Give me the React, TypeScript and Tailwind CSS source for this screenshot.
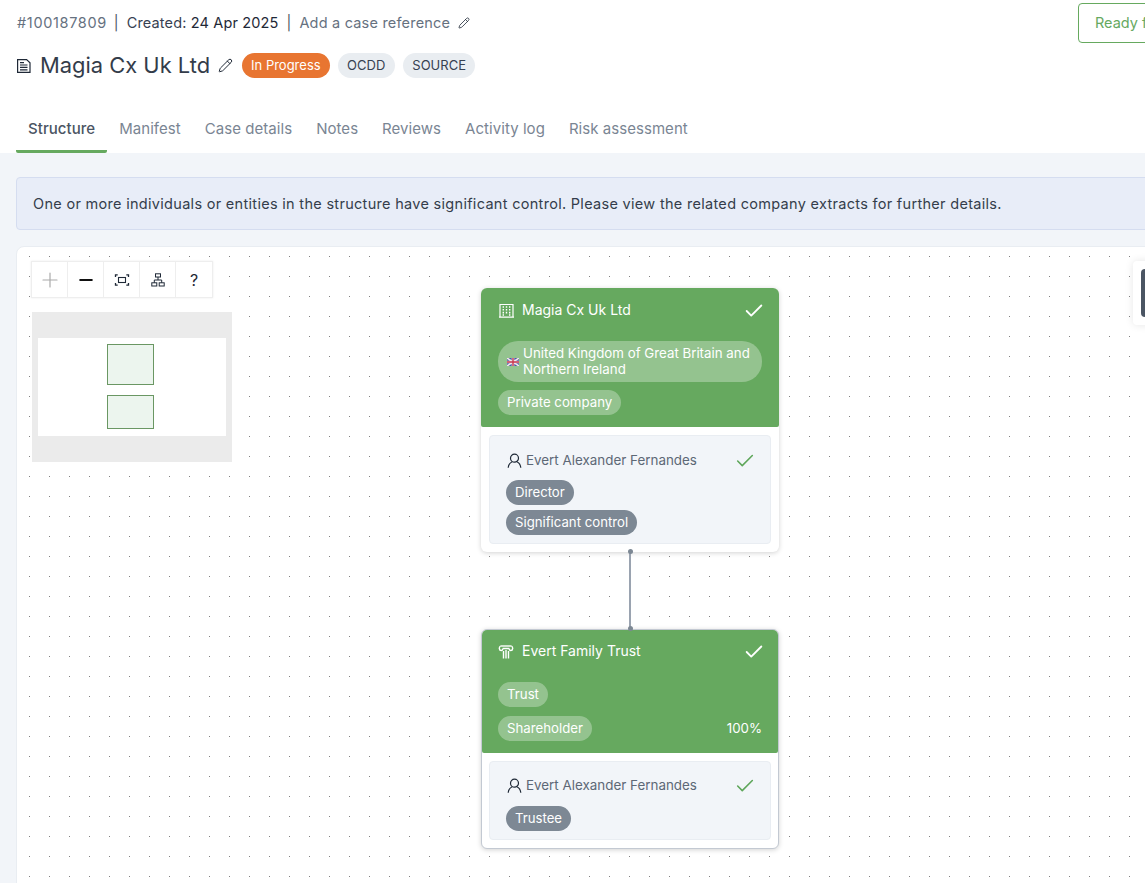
import type { ReactNode } from 'react';
import { Check, Minus, Pencil, Plus } from 'lucide-react';

const tabs = ['Structure', 'Manifest', 'Case details', 'Notes', 'Reviews', 'Activity log', 'Risk assessment'];

const DocIcon = () => (
    <svg width="16" height="16" viewBox="0 0 16 16" fill="none" stroke="#1f2937" strokeWidth="1.2" className="shrink-0">
        <path d="M1.6 1.6h9l3.4 3.2v9.6H1.6z" />
        <path d="M4 4.6h4M4 7h7.5M4 9.4h7.5M4 11.8h7.5" />
    </svg>
);

const BuildingIcon = () => (
    <svg width="16" height="16" viewBox="0 0 16 16" fill="none" stroke="white" strokeWidth="1.2" className="shrink-0">
        <path d="M1 15.2h15M2 15.2V2.5h13v12.7" />
        <path d="M4.6 5h1.4M7.8 5h1.4M11 5h1.4M4.6 7.8h1.4M7.8 7.8h1.4M11 7.8h1.4M4.6 10.6h1.4M7.8 10.6h1.4M11 10.6h1.4M4.6 13h1.4M11 13h1.4" strokeWidth="1.6" />
    </svg>
);

const PillarIcon = () => (
    <svg width="16" height="16" viewBox="0 0 16 16" fill="none" stroke="white" strokeWidth="1.4" className="shrink-0">
        <path d="M2.5 3h11" />
        <path d="M2.5 3C.8 4 .9 7.5 3.2 7.5c1.2 0 1.7-1 1.4-1.9M13.5 3c1.7 1 1.6 4.5-.7 4.5-1.2 0-1.7-1-1.4-1.9M4.6 5.5h6.8" />
        <path d="M5.5 8v7.5M8 7v8.5M10.5 8v7.5" />
    </svg>
);

const PersonIcon = () => (
    <svg width="15" height="16" viewBox="0 0 15 16" fill="none" stroke="#1f2937" strokeWidth="1.2" className="shrink-0">
        <circle cx="7.5" cy="5.2" r="4" />
        <path d="M1.2 14.8c.3-3 2.3-5.2 3.6-5.8M13.8 14.8c-.3-3-2.3-5.2-3.6-5.8" />
    </svg>
);

const UkFlag = () => (
    <svg width="12" height="8" viewBox="0 0 12 8" className="shrink-0">
        <rect width="12" height="8" fill="#4a5aa8" />
        <path d="M0 0l12 8M12 0L0 8" stroke="#f3e6ea" strokeWidth="1.6" />
        <path d="M6 0v8M0 4h12" stroke="#f3e6ea" strokeWidth="2.6" />
        <path d="M6 0v8M0 4h12" stroke="#c8354f" strokeWidth="1.4" />
    </svg>
);

const FitIcon = () => (
    <svg width="16" height="16" viewBox="0 0 16 16" fill="none" stroke="#1f2937">
        <path d="M1.5 5V2.9h2.2M12.3 2.9h2.2V5M14.5 11v2.1h-2.2M3.7 13.1H1.5V11" strokeWidth="1.3" />
        <rect x="4.5" y="5.5" width="7" height="5" strokeWidth="1.1" />
    </svg>
);

const TreeIcon = () => (
    <svg width="14" height="14" viewBox="0 0 14 14" fill="none" stroke="#1f2937" strokeWidth="1">
        <rect x="4.5" y="0.8" width="5" height="3.2" />
        <rect x="0.8" y="9.8" width="5" height="3.2" />
        <rect x="8.2" y="9.8" width="5" height="3.2" />
        <path d="M7 4v3M3.3 9.8V7h7.4v2.8" />
    </svg>
);

const LightPill = ({ children, className = '' }: { children: ReactNode; className?: string }) => (
    <div className={`w-fit rounded-full bg-[#94c38f] px-[9px] py-[4px] text-[13.25px] leading-[17px] text-white ${className}`}>
        {children}
    </div>
);

const RolePill = ({ children }: { children: ReactNode }) => (
    <div className="w-fit rounded-full bg-[#7d8894] px-[9px] py-[4px] text-[13.2px] leading-[17px] text-white">{children}</div>
);

const OfficerRow = () => (
    <div className="flex items-center">
        <PersonIcon />
        <span className="ml-[4px] flex-1 text-[13.4px] leading-[17px] text-[#5d6876]">Evert Alexander Fernandes</span>
        <Check size={22} strokeWidth={1.7} className="my-[-3px] text-[#5ea65a]" />
    </div>
);

export default function App() {
    return (
        <div className="h-[883px] w-[1145px] overflow-hidden bg-[#f2f5f9] font-['Inter',sans-serif] text-[#1f2937]">
            {/* Header */}
            <div className="relative h-[153px] bg-white px-[16px] pt-[14px]">
                <div className="flex h-[18px] items-center text-[14.5px] leading-[18px]">
                    <span className="ml-[1px] tracking-[0.65px] text-[#66717f]">#100187809</span>
                    <span className="ml-[7px] mr-[8px] text-[#4b5563]">|</span>
                    <span className="tracking-[0.15px] text-[#374151]">
                        Created: <span className="text-[#1f2937]">24 Apr 2025</span>
                    </span>
                    <span className="ml-[8px] mr-[8px] text-[#4b5563]">|</span>
                    <span className="tracking-[0.2px] text-[#66717f]">Add a case reference</span>
                    <Pencil size={12} strokeWidth={1.6} className="ml-[8px] text-[#1f2937]" />
                </div>
                <div className="mt-[21px] flex h-[25px] items-center">
                    <DocIcon />
                    <span className="ml-[8px] text-[21.9px] leading-[25px] text-[#333c4a]">Magia Cx Uk Ltd</span>
                    <Pencil size={15} strokeWidth={1.6} className="ml-[8px] text-[#1f2937]" />
                    <span className="ml-[9px] rounded-full bg-[#e87531] px-[9px] py-[4px] text-[13px] leading-[17px] text-white">In Progress</span>
                    <span className="ml-[8px] rounded-full bg-[#e9edf1] px-[9.5px] py-[4px] text-[13px] leading-[17px] text-[#374151]">OCDD</span>
                    <span className="ml-[8px] rounded-full bg-[#e9edf1] px-[9.5px] py-[4px] text-[13px] leading-[17px] text-[#374151]">SOURCE</span>
                </div>
                <div className="mt-[37px] flex">
                    {tabs.map((tab, i) => (
                        <div
                            key={tab}
                            className={`h-[38px] px-[12px] pt-[5px] text-[15px] leading-[18px] tracking-[0.05px] ${i === 0 ? 'rounded-b-[2px] border-b-[3px] border-[#66a95f] font-medium text-[#4b5563]' : 'text-[#7a8593]'}`}
                        >
                            {tab}
                        </div>
                    ))}
                </div>
                <div className="absolute left-[1078px] top-[3px] flex h-[40px] w-[120px] items-center rounded-[4px] border border-[#66a95f] pl-[16px] text-[14.5px] text-[#66a95f]">
                    <span className="whitespace-nowrap">Ready for review</span>
                </div>
            </div>

            {/* Body */}
            <div className="w-[1200px] px-[16px] pt-[24px]">
                <div className="flex h-[53px] items-center rounded-[4px] border border-[#d5ddf0] bg-[#e8edf8] pl-[16px] text-[14.5px] tracking-[0.3px] text-[#343d4b]">
                    One or more individuals or entities in the structure have significant control. Please view the related company extracts for further details.
                </div>

                <div className="relative mt-[16px] h-[700px] rounded-tl-[8px] border border-[#e9edf2] bg-white bg-[radial-gradient(circle_at_12.5px_9.5px,#808080_0.6px,transparent_0.6px)] bg-[size:20px_20px]">
                    {/* Controls */}
                    <div className="absolute left-[14px] top-[14px] flex h-[37px] border border-[#eeeeee] bg-white shadow-[0_0_2px_rgba(0,0,0,0.08)]">
                        <div className="flex w-[36px] items-center justify-center border-r border-[#eeeeee]"><Plus size={24} strokeWidth={1.2} className="text-[#aaaaaa]" /></div>
                        <div className="flex w-[36px] items-center justify-center border-r border-[#eeeeee]"><Minus size={20} strokeWidth={2.4} className="text-[#111111]" /></div>
                        <div className="flex w-[36px] items-center justify-center border-r border-[#eeeeee]"><FitIcon /></div>
                        <div className="flex w-[36px] items-center justify-center border-r border-[#eeeeee]"><TreeIcon /></div>
                        <div className="flex w-[36px] items-center justify-center text-[16px] text-[#1f2937]">?</div>
                    </div>

                    {/* Minimap */}
                    <div className="absolute left-[15px] top-[65px] flex h-[150px] w-[200px] flex-col justify-center bg-[#ebebeb] px-[6px]">
                        <div className="flex h-[98px] flex-col items-center bg-white pr-[4px] pt-[6px]">
                            <div className="h-[41px] w-[47px] border border-[#6a9763] bg-[#ecf5ee]" />
                            <div className="mt-[10px] h-[34px] w-[47px] border border-[#6a9763] bg-[#ecf5ee]" />
                        </div>
                    </div>

                    {/* Company node */}
                    <div className="absolute left-[464px] top-[41px] w-[298px] rounded-[6px] bg-white shadow-[0_1px_5px_rgba(0,0,0,0.18)]">
                        <div className="h-[139px] rounded-b-[2px] rounded-t-[6px] bg-[#66a95f] pl-[17px] pr-[14px] pt-[13px] text-white">
                            <div className="flex h-[18px] items-center">
                                <BuildingIcon />
                                <span className="ml-[8px] flex-1 text-[14px] leading-[18px]">Magia Cx Uk Ltd</span>
                                <Check size={22} strokeWidth={2} className="mb-[-4px] mt-[-2px]" />
                            </div>
                            <div className="mt-[22px] flex h-[41px] w-[264px] items-center rounded-[20px] bg-[#94c38f] px-[9px] text-[13.3px] leading-[16px]">
                                <UkFlag />
                                <span className="mb-[2px] ml-[4px]">United Kingdom of Great Britain and Northern Ireland</span>
                            </div>
                            <LightPill className="mt-[8px]">Private company</LightPill>
                        </div>
                        <div className="p-[8px]">
                            <div className="h-[109px] rounded-[4px] border border-[#e9edf2] bg-[#f2f5f9] pl-[17px] pr-[14px] pt-[16px]">
                                <OfficerRow />
                                <div className="-ml-[1px] mt-[11px] flex flex-col gap-[5px]">
                                    <RolePill>Director</RolePill>
                                    <RolePill>Significant control</RolePill>
                                </div>
                            </div>
                        </div>
                    </div>

                    {/* Trust node */}
                    <div className="absolute left-[464px] top-[382px] w-[298px] rounded-[6px] border border-[#c3c9d2] bg-white shadow-[0_1px_5px_rgba(0,0,0,0.18)]">
                        <div className="h-[123px] rounded-b-[2px] rounded-t-[5px] bg-[#66a95f] pl-[16px] pr-[13px] pt-[12px] text-white">
                            <div className="flex h-[18px] items-center">
                                <PillarIcon />
                                <span className="ml-[8px] flex-1 text-[14px] leading-[18px]">Evert Family Trust</span>
                                <Check size={22} strokeWidth={2} className="mb-[-4px] mt-[-2px]" />
                            </div>
                            <LightPill className="mt-[22px]">Trust</LightPill>
                            <div className="mt-[9px] flex items-center justify-between pr-[3px]">
                                <LightPill>Shareholder</LightPill>
                                <span className="text-[13.3px]">100%</span>
                            </div>
                        </div>
                        <div className="px-[7px] pb-[8px] pt-[8px]">
                            <div className="h-[79px] rounded-[4px] border border-[#e9edf2] bg-[#f2f5f9] pl-[17px] pr-[14px] pt-[15px]">
                                <OfficerRow />
                                <div className="-ml-[1px] mt-[12px]">
                                    <RolePill>Trustee</RolePill>
                                </div>
                            </div>
                        </div>
                    </div>

                    {/* Edge between the nodes */}
                    <div className="absolute left-[612px] top-[304px] h-[78px] w-[2px] bg-[#9aa3b0]" />
                    <div className="absolute left-[610.5px] top-[302px] h-[5px] w-[5px] rounded-full bg-[#7d8894]" />
                    <div className="absolute left-[610.5px] top-[379px] h-[5px] w-[5px] rounded-full bg-[#7d8894]" />

                    {/* Right panel edge */}
                    <div className="absolute left-[1116px] top-[14px] h-[64px] w-[60px] rounded-[4px] bg-white p-[8px] shadow-[0_0_8px_rgba(0,0,0,0.1)]">
                        <div className="h-[48px] rounded-[4px] bg-[#4b5563]" />
                    </div>
                </div>
            </div>
        </div>
    );
}
